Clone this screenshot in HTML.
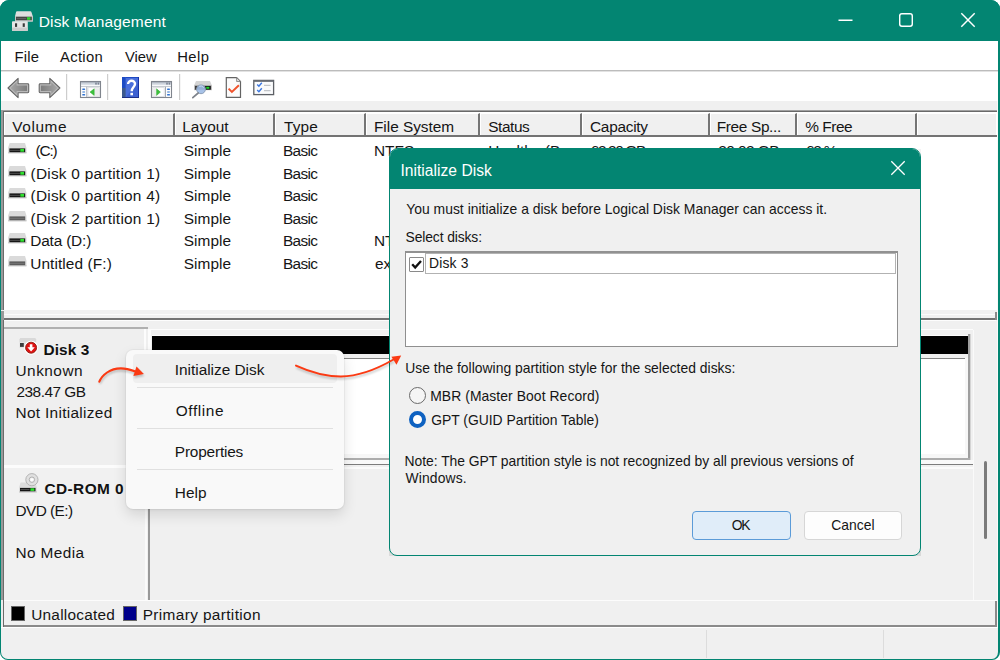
<!DOCTYPE html>
<html>
<head>
<meta charset="utf-8">
<title>Disk Management</title>
<style>
*{box-sizing:border-box;margin:0;padding:0}
html,body{width:1000px;height:660px;overflow:hidden;background:#fff}
body{font-family:"Liberation Sans",sans-serif;color:#151515;position:relative}
.abs{position:absolute}
.t{position:absolute;white-space:pre;line-height:20px;height:20px;color:#151515}
#win{position:absolute;left:0;top:0;width:1000px;height:660px;border-radius:9px 9px 8px 8px;background:#f0f0f0;overflow:hidden}
#winborder{position:absolute;left:0;top:0;width:1000px;height:660px;border-radius:9px 9px 8px 8px;border:1px solid #038572;border-right-width:2px;pointer-events:none;z-index:5}
#titlebar{left:0;top:0;width:1000px;height:41px;background:#038572}
#menubar{left:1px;top:41px;width:998px;height:29px;background:#fff}
#menuline{left:1px;top:70px;width:998px;height:2px;background:#e2e2e2;border-top:1px solid #bcbcbc;z-index:1}
#toolbar{left:1px;top:71px;width:998px;height:30px;background:#fff}
.hd{position:absolute;top:113px;height:22px;background:#f0f0f0;border-left:1px solid #fff;border-top:1px solid #fff;border-right:2px solid #757575}
</style>
</head>
<body>
<div id="win">
  <div id="titlebar" class="abs">
    <svg class="abs" style="left:11px;top:9px" width="24" height="24" viewBox="0 0 24 24">
      <path d="M6 2.3 L19.4 2.3 Q20.2 2.3 20.5 3.2 L21.8 7.2 L21.8 12.6 L4 12.6 L4 7.2 L5 3.2 Q5.2 2.3 6 2.3 Z" fill="#dedede"/>
      <path d="M4 7 H21.8 V12.6 H4 Z" fill="#c4c4c4"/>
      <rect x="5" y="7.8" width="15.8" height="3.4" fill="#454545"/>
      <rect x="5.6" y="9" width="9.5" height="0.8" fill="#6a6a6a"/>
      <rect x="16" y="8.2" width="3.4" height="2.6" fill="#2ed82e"/>
      <rect x="1" y="12.3" width="15.8" height="9.7" rx="0.8" fill="#e6e6e6"/>
      <rect x="1" y="18.6" width="15.8" height="3.4" rx="0.8" fill="#cdcdcd"/>
      <rect x="4" y="14.3" width="2.1" height="3.6" fill="#3a3a3a"/>
      <rect x="11.7" y="14.3" width="2.1" height="3.6" fill="#3a3a3a"/>
    </svg>
    <div class="t" style="left:38.70px;top:12px;font-size:15.5px;letter-spacing:0.156px;color:#fff">Disk Management</div>
    <svg class="abs" style="left:830px;top:6px" width="160" height="30" viewBox="0 0 160 30" fill="none" stroke="#fff" stroke-width="1.45">
      <path d="M8.5 14.2 H22.5"/>
      <rect x="69.7" y="7.7" width="12.6" height="12.6" rx="2.2"/>
      <path d="M131.3 7.3 L144.7 20.7 M144.7 7.3 L131.3 20.7"/>
    </svg>
  </div>
  <div id="menubar" class="abs"></div>
  <div class="t" style="left:14.50px;top:47px;font-size:14.8px;letter-spacing:0.196px">File</div>
  <div class="t" style="left:60.00px;top:47px;font-size:14.8px;letter-spacing:0.321px">Action</div>
  <div class="t" style="left:125.00px;top:47px;font-size:14.8px;letter-spacing:-0.040px">View</div>
  <div class="t" style="left:177.20px;top:47px;font-size:14.8px;letter-spacing:0.432px">Help</div>
  <div id="menuline" class="abs"></div>
  <div id="toolbar" class="abs">
    <svg class="abs" style="left:0;top:0" width="300" height="30" viewBox="1 71 300 30">
      <defs>
        <linearGradient id="ga" x1="0" y1="0" x2="1" y2="0"><stop offset="0" stop-color="#a6a6a6"/><stop offset="1" stop-color="#7d7d7d"/></linearGradient>
        <linearGradient id="gb" x1="1" y1="0" x2="0" y2="0"><stop offset="0" stop-color="#a6a6a6"/><stop offset="1" stop-color="#7d7d7d"/></linearGradient>
        <linearGradient id="gt" x1="0" y1="0" x2="0" y2="1"><stop offset="0" stop-color="#7f8692"/><stop offset="0.35" stop-color="#c5ccd6"/><stop offset="1" stop-color="#e3e7ec"/></linearGradient>
      </defs>
      <!-- back / forward arrows -->
      <path d="M8 88 L18.1 78.3 L18.1 83.8 L27.8 83.8 Q28.7 83.8 28.7 84.7 L28.7 91.8 Q28.7 92.7 27.8 92.7 L18.1 92.7 L18.1 97.6 Z" fill="#b9b9b9" stroke="#676767" stroke-width="1.1" stroke-linejoin="round"/>
      <path d="M10.6 88 L16.6 82.2 L16.6 85.4 L27 85.4 L27 91.1 L16.6 91.1 L16.6 93.8 Z" fill="url(#ga)"/>
      <path d="M59.9 88 L49.8 78.3 L49.8 83.8 L40.1 83.8 Q39.2 83.8 39.2 84.7 L39.2 91.8 Q39.2 92.7 40.1 92.7 L49.8 92.7 L49.8 97.6 Z" fill="#b9b9b9" stroke="#676767" stroke-width="1.1" stroke-linejoin="round"/>
      <path d="M57.3 88 L51.3 82.2 L51.3 85.4 L40.9 85.4 L40.9 91.1 L51.3 91.1 L51.3 93.8 Z" fill="url(#gb)"/>
      <rect x="66" y="74" width="1.2" height="26" fill="#cdcdcd"/>
      <rect x="107" y="74" width="1.2" height="26" fill="#cdcdcd"/>
      <rect x="179" y="74" width="1.2" height="26" fill="#cdcdcd"/>
      <!-- show/hide console tree -->
      <rect x="80.5" y="81.5" width="20" height="16" fill="#fdfdfd" stroke="#80858d" stroke-width="1.1"/>
      <rect x="81" y="81.6" width="19" height="3.6" fill="url(#gt)"/>
      <rect x="95.2" y="82.6" width="1.6" height="2" fill="#7c8494"/><rect x="97.6" y="82.6" width="1.6" height="2" fill="#7c8494"/>
      <rect x="81" y="86" width="19" height="0.8" fill="#b9bec6"/>
      <rect x="86.3" y="86.8" width="1" height="10.2" fill="#a4a9b1"/>
      <rect x="82.2" y="88.4" width="3" height="1.5" rx="0.7" fill="#2f73d3"/><rect x="82.2" y="91.3" width="3" height="1.5" rx="0.7" fill="#6f9fe0"/><rect x="82.2" y="94.1" width="3" height="1.5" rx="0.7" fill="#2f73d3"/>
      <rect x="88" y="87.6" width="11.4" height="9" fill="#fff" stroke="#d9dbde" stroke-width="0.8"/>
      <rect x="94.3" y="88.2" width="4.6" height="7.8" fill="#ececec"/>
      <path d="M94.2 88.8 L94.2 95.4 L90 92.1 Z" fill="#3dc13d" stroke="#2aa82a" stroke-width="0.5"/>
      <!-- help -->
      <rect x="122" y="77" width="17" height="21" fill="#4a6fdb"/>
      <rect x="122" y="77" width="3.6" height="11" fill="#1c4bc4"/>
      <rect x="122" y="88" width="3.6" height="10" fill="#3c5a8e"/>
      <rect x="125.6" y="77" width="13.4" height="1" fill="#1d49c4"/>
      <rect x="138" y="77" width="1" height="21" fill="#1733a6"/>
      <rect x="122" y="97" width="17" height="1" fill="#1b2f86"/>
      <path d="M133 88 L138 83 L138 97 L126 97 Z" fill="#3558c9" opacity="0.6"/>
      <path d="M128.1 84 C128 79.7 135.1 79.7 135 84 C135 86.8 131.7 87.3 131.7 91.2" fill="none" stroke="#fff" stroke-width="2.4"/>
      <rect x="130.4" y="92.8" width="2.6" height="2.5" fill="#fff"/>
      <!-- action pane -->
      <rect x="151.5" y="81.5" width="20" height="16" fill="#fdfdfd" stroke="#80858d" stroke-width="1.1"/>
      <rect x="152" y="81.6" width="19" height="3.6" fill="url(#gt)"/>
      <rect x="166.2" y="82.6" width="1.6" height="2" fill="#7c8494"/><rect x="168.6" y="82.6" width="1.6" height="2" fill="#7c8494"/>
      <rect x="152" y="86" width="19" height="0.8" fill="#b9bec6"/>
      <rect x="165" y="86.8" width="1" height="10.2" fill="#a4a9b1"/>
      <rect x="167" y="88.4" width="3" height="1.5" rx="0.7" fill="#2f73d3"/><rect x="167" y="91.3" width="3" height="1.5" rx="0.7" fill="#6f9fe0"/><rect x="167" y="94.1" width="3" height="1.5" rx="0.7" fill="#2f73d3"/>
      <rect x="152.8" y="87.6" width="11.4" height="9" fill="#fff" stroke="#d9dbde" stroke-width="0.8"/>
      <rect x="153.3" y="88.2" width="3.2" height="7.8" fill="#ececec"/>
      <path d="M156.6 88.8 L156.6 95.4 L160.4 92.1 Z" fill="#3dc13d" stroke="#2aa82a" stroke-width="0.5"/>
      <!-- disk + magnifier -->
      <path d="M196 81 L210 81 L212 85.4 L194 85.4 Z" fill="#d4d4d4"/>
      <rect x="194" y="85.2" width="18" height="5" fill="#bdbdbd"/>
      <rect x="195" y="85.8" width="16" height="3.9" fill="#3e3e3e"/>
      <rect x="205.3" y="86.2" width="5" height="3.2" fill="#0d0d0d"/>
      <rect x="206.2" y="86.8" width="3.2" height="2" fill="#1fd42a"/>
      <circle cx="201" cy="89.3" r="4.4" fill="#9dbbe6" fill-opacity="0.9" stroke="#8ea0b8" stroke-width="1"/>
      <path d="M199.2 86.4 A3.2 3.2 0 0 1 203.6 87.8" fill="none" stroke="#c9daf2" stroke-width="1"/>
      <path d="M198.2 93 L192.8 97.6" stroke="#7e838b" stroke-width="1.7" stroke-linecap="round" fill="none"/>
      <!-- doc with check -->
      <path d="M226.3 77.6 L236.6 77.6 L240.5 81.5 L240.5 97.4 L226.3 97.4 Z" fill="#fbfbfb" stroke="#636363" stroke-width="1.2"/>
      <path d="M236.6 77.6 L236.6 81.5 L240.5 81.5 Z" fill="#dcdcdc" stroke="#7a7a7a" stroke-width="0.8"/>
      <path d="M228.6 88.6 L231.9 91.9 L238.9 85.2" fill="none" stroke="#f0532c" stroke-width="2"/>
      <!-- checklist -->
      <rect x="253.8" y="80.4" width="19.8" height="14.2" fill="#fafbfc" stroke="#5d6066" stroke-width="1.3"/>
      <rect x="254" y="80.3" width="19.4" height="1.6" fill="#6c7078"/>
      <path d="M257.2 84.6 L258.9 86.3 L261.8 82.8" fill="none" stroke="#3a76e0" stroke-width="1.4"/>
      <path d="M257.2 90 L258.9 91.7 L261.8 88.2" fill="none" stroke="#3a76e0" stroke-width="1.4"/>
      <rect x="264" y="84.8" width="6.6" height="1" fill="#b3b7bd"/>
      <rect x="264" y="90.2" width="6.6" height="1" fill="#b3b7bd"/>
    </svg>
  </div>
  <!-- list view -->
  <div class="abs" style="left:1px;top:110px;width:996px;height:201px;background:#fff;border-top:1px solid #a0a0a0;border-left:3px solid #9a9a9a"></div>
  <div class="abs" style="left:3px;top:111px;width:994px;height:1px;background:#696969"></div>
  <div class="abs" style="left:3px;top:112px;width:1px;height:199px;background:#6b6b6b"></div>
  <div class="abs" style="left:4px;top:112px;width:993px;height:1px;background:#fff"></div>
  <div class="abs" style="left:4px;top:135px;width:993px;height:2px;background:#737373"></div>
  <div class="hd" style="left:4px;width:171px"></div>
  <div class="hd" style="left:175px;width:100px"></div>
  <div class="hd" style="left:275px;width:91px"></div>
  <div class="hd" style="left:366px;width:114px"></div>
  <div class="hd" style="left:480px;width:102px"></div>
  <div class="hd" style="left:582px;width:128px"></div>
  <div class="hd" style="left:710px;width:87px"></div>
  <div class="hd" style="left:797px;width:120px"></div>
  <div class="hd" style="left:917px;width:79px;border-right:none"></div>
  <div class="t" style="left:12.30px;top:117px;font-size:15.4px;letter-spacing:0.585px">Volume</div>
  <div class="t" style="left:182.30px;top:117px;font-size:15.4px;letter-spacing:0.013px">Layout</div>
  <div class="t" style="left:284.00px;top:117px;font-size:15.4px;letter-spacing:0.165px">Type</div>
  <div class="t" style="left:374.00px;top:117px;font-size:15.4px;letter-spacing:-0.027px">File System</div>
  <div class="t" style="left:488.30px;top:117px;font-size:15.4px;letter-spacing:-0.447px">Status</div>
  <div class="t" style="left:590.00px;top:117px;font-size:15.4px;letter-spacing:-0.269px">Capacity</div>
  <div class="t" style="left:716.70px;top:117px;font-size:15.4px;letter-spacing:-0.333px">Free Sp...</div>
  <div class="t" style="left:805.30px;top:117px;font-size:15.4px;letter-spacing:-0.469px">% Free</div>
  <svg class="abs" style="left:8px;top:143px" width="19" height="11" viewBox="0 0 19 11"><path d="M1.6 0 H17 L18.5 4.8 V10.3 H0.1 V4.8 Z" fill="#dadada"/><rect x="0.1" y="9.2" width="18.4" height="1.1" fill="#c6c6c6"/><rect x="1.4" y="5.4" width="15.8" height="3.8" fill="#161616"/><rect x="2" y="6.9" width="10" height="0.8" fill="#5a5a5a"/><rect x="12.3" y="5.9" width="3.8" height="2.8" fill="#2ee02e"/></svg>
  <div class="t" style="left:35.50px;top:141px;font-size:15.4px;letter-spacing:-1.172px">(C:)</div>
  <div class="t" style="left:183.70px;top:141px;font-size:15.4px;letter-spacing:0.063px">Simple</div>
  <div class="t" style="left:283.00px;top:141px;font-size:15.4px;letter-spacing:-0.660px">Basic</div>
  <div class="t" style="left:374.00px;top:141px;font-size:15.4px;letter-spacing:0.000px">NTFS</div>
  <div class="t" style="left:488.30px;top:141px;font-size:15.4px;letter-spacing:0.000px">Healthy (B...</div>
  <div class="t" style="left:590.70px;top:141px;font-size:15.4px;letter-spacing:-1.352px">62.20 GB</div>
  <div class="t" style="left:718.30px;top:141px;font-size:15.4px;letter-spacing:-0.537px">20.02 GB</div>
  <div class="t" style="left:806.00px;top:141px;font-size:15.4px;letter-spacing:-1.232px">62 %</div>
  <svg class="abs" style="left:8px;top:166px" width="19" height="11" viewBox="0 0 19 11"><path d="M1.6 0 H17 L18.5 4.8 V10.3 H0.1 V4.8 Z" fill="#dadada"/><rect x="0.1" y="9.2" width="18.4" height="1.1" fill="#c6c6c6"/><rect x="1.4" y="5.4" width="15.8" height="3.8" fill="#161616"/><rect x="2" y="6.9" width="10" height="0.8" fill="#5a5a5a"/><rect x="12.3" y="5.9" width="3.8" height="2.8" fill="#2ee02e"/></svg>
  <div class="t" style="left:30.50px;top:164px;font-size:15.4px;letter-spacing:0.250px">(Disk 0 partition 1)</div>
  <div class="t" style="left:183.70px;top:164px;font-size:15.4px;letter-spacing:0.063px">Simple</div>
  <div class="t" style="left:283.00px;top:164px;font-size:15.4px;letter-spacing:-0.660px">Basic</div>
  <svg class="abs" style="left:8px;top:188px" width="19" height="11" viewBox="0 0 19 11"><path d="M1.6 0 H17 L18.5 4.8 V10.3 H0.1 V4.8 Z" fill="#dadada"/><rect x="0.1" y="9.2" width="18.4" height="1.1" fill="#c6c6c6"/><rect x="1.4" y="5.4" width="15.8" height="3.8" fill="#161616"/><rect x="2" y="6.9" width="10" height="0.8" fill="#5a5a5a"/><rect x="12.3" y="5.9" width="3.8" height="2.8" fill="#2ee02e"/></svg>
  <div class="t" style="left:30.50px;top:186px;font-size:15.4px;letter-spacing:0.250px">(Disk 0 partition 4)</div>
  <div class="t" style="left:183.70px;top:186px;font-size:15.4px;letter-spacing:0.063px">Simple</div>
  <div class="t" style="left:283.00px;top:186px;font-size:15.4px;letter-spacing:-0.660px">Basic</div>
  <svg class="abs" style="left:8px;top:211px" width="19" height="11" viewBox="0 0 19 11"><path d="M1.6 0 H17 L18.5 4.8 V10.3 H0.1 V4.8 Z" fill="#dadada"/><rect x="0.1" y="9.2" width="18.4" height="1.1" fill="#c6c6c6"/><rect x="1.4" y="5.4" width="15.8" height="3.8" fill="#5c5c5c"/><rect x="2" y="6.9" width="14.5" height="0.8" fill="#7a7a7a"/></svg>
  <div class="t" style="left:30.50px;top:209px;font-size:15.4px;letter-spacing:0.250px">(Disk 2 partition 1)</div>
  <div class="t" style="left:183.70px;top:209px;font-size:15.4px;letter-spacing:0.063px">Simple</div>
  <div class="t" style="left:283.00px;top:209px;font-size:15.4px;letter-spacing:-0.660px">Basic</div>
  <svg class="abs" style="left:8px;top:233px" width="19" height="11" viewBox="0 0 19 11"><path d="M1.6 0 H17 L18.5 4.8 V10.3 H0.1 V4.8 Z" fill="#dadada"/><rect x="0.1" y="9.2" width="18.4" height="1.1" fill="#c6c6c6"/><rect x="1.4" y="5.4" width="15.8" height="3.8" fill="#161616"/><rect x="2" y="6.9" width="10" height="0.8" fill="#5a5a5a"/><rect x="12.3" y="5.9" width="3.8" height="2.8" fill="#2ee02e"/></svg>
  <div class="t" style="left:30.20px;top:231px;font-size:15.4px;letter-spacing:-0.163px">Data (D:)</div>
  <div class="t" style="left:183.70px;top:231px;font-size:15.4px;letter-spacing:0.063px">Simple</div>
  <div class="t" style="left:283.00px;top:231px;font-size:15.4px;letter-spacing:-0.660px">Basic</div>
  <div class="t" style="left:374.00px;top:231px;font-size:15.4px;letter-spacing:0.000px">NTFS</div>
  <svg class="abs" style="left:8px;top:256px" width="19" height="11" viewBox="0 0 19 11"><path d="M1.6 0 H17 L18.5 4.8 V10.3 H0.1 V4.8 Z" fill="#dadada"/><rect x="0.1" y="9.2" width="18.4" height="1.1" fill="#c6c6c6"/><rect x="1.4" y="5.4" width="15.8" height="3.8" fill="#5c5c5c"/><rect x="2" y="6.9" width="14.5" height="0.8" fill="#7a7a7a"/></svg>
  <div class="t" style="left:30.20px;top:254px;font-size:15.4px;letter-spacing:0.103px">Untitled (F:)</div>
  <div class="t" style="left:183.70px;top:254px;font-size:15.4px;letter-spacing:0.063px">Simple</div>
  <div class="t" style="left:283.00px;top:254px;font-size:15.4px;letter-spacing:-0.660px">Basic</div>
  <div class="t" style="left:375.00px;top:254px;font-size:15.4px;letter-spacing:0.000px">exFAT</div>
  <!-- splitter -->
  <div class="abs" style="left:1px;top:310px;width:998px;height:11px;background:#f0f0f0"></div>
  <div class="abs" style="left:4px;top:314px;width:992px;height:1px;background:#fbfbfb"></div>
  <div class="abs" style="left:4px;top:318px;width:992px;height:2px;background:#737373"></div>
  <div class="abs" style="left:4px;top:320px;width:992px;height:1px;background:#fdfdfd"></div>
  <div class="abs" style="left:995px;top:312px;width:2px;height:8px;background:#8a8a8a"></div>
  <!-- lower pane -->
  <div class="abs" style="left:1px;top:311px;width:3px;height:316px;background:#9a9a9a"></div>
  <div class="abs" style="left:3px;top:320px;width:1px;height:307px;background:#6b6b6b"></div>
  <div class="abs" style="left:4px;top:327px;width:144px;height:138px;background:#efefef;border-top:2px solid #b0b0b0"></div>
  <div class="abs" style="left:144px;top:329px;width:2px;height:136px;background:#fcfcfc"></div>
  <div class="abs" style="left:148px;top:329px;width:3px;height:136px;background:#fcfcfc"></div>
  <div class="abs" style="left:151px;top:329px;width:822px;height:1px;background:#fcfcfc"></div>
  <div class="abs" style="left:4px;top:465px;width:142px;height:136px;background:#f1f1f1;border-top:3px solid #fcfcfc"></div>
  <div class="abs" style="left:145px;top:466px;width:2px;height:134px;background:#fafafa"></div>
  <div class="abs" style="left:148px;top:466px;width:2px;height:134px;background:#989898"></div>
  <div class="abs" style="left:152px;top:335px;width:816px;height:1px;background:#fbfbfb"></div>
  <div class="abs" style="left:152px;top:336px;width:816px;height:18px;background:#000"></div>
  <div class="abs" style="left:968px;top:334px;width:2px;height:126px;background:#9e9e9e"></div>
  <div class="abs" style="left:970px;top:334px;width:1px;height:126px;background:#d4d4d4"></div>
  <div class="abs" style="left:152px;top:358px;width:816px;height:100px;background:#f7f7f7"></div>
  <div class="abs" style="left:152px;top:358px;width:813px;height:96px;background:#fff;border-top:1px solid #858585"></div>
  <div class="abs" style="left:152px;top:458px;width:818px;height:2px;background:#adadad"></div>
  <div class="abs" style="left:152px;top:460px;width:821px;height:4px;background:#f9f9f9"></div>
  <div class="abs" style="left:152px;top:464px;width:821px;height:1px;background:#7c7c7c"></div>
  <div class="abs" style="left:152px;top:467px;width:821px;height:2px;background:#fbfbfb"></div>
  <div class="abs" style="left:973px;top:330px;width:1px;height:270px;background:#fafafa"></div>
  <div class="abs" style="left:984px;top:461px;width:3px;height:78px;background:#7b7b7b;border-radius:2px"></div>
  <div class="abs" style="left:997px;top:101px;width:1px;height:527px;background:#fafafa"></div>
  <!-- Disk 3 label -->
  <svg class="abs" style="left:18px;top:336px" width="22" height="20" viewBox="0 0 22 20">
    <path d="M2.2 2 H17.4 L18.2 3.4 V6.6 H1.4 V3.4 Z" fill="#d9d9d9"/>
    <rect x="1.4" y="6.4" width="9" height="5.4" fill="#e3e3e3"/>
    <rect x="2" y="7" width="3.8" height="3.9" fill="#3d3d3d"/>
    <circle cx="13.1" cy="11.7" r="7" fill="#fff"/>
    <circle cx="13.1" cy="11.7" r="5.5" fill="#e01212" stroke="#8d1c10" stroke-width="0.9"/>
    <path d="M11.8 8.3 H14.4 V11.3 H16.8 L13.1 15.6 L9.4 11.3 H11.8 Z" fill="#fff"/>
  </svg>
  <div class="t" style="left:43.50px;top:340px;font-size:15.4px;letter-spacing:0.083px;font-weight:bold;color:#111">Disk 3</div>
  <div class="t" style="left:15.50px;top:361px;font-size:15.4px;letter-spacing:0.483px">Unknown</div>
  <div class="t" style="left:16.50px;top:382px;font-size:15.4px;letter-spacing:-0.515px">238.47 GB</div>
  <div class="t" style="left:15.50px;top:403px;font-size:15.4px;letter-spacing:0.312px">Not Initialized</div>
  <svg class="abs" style="left:18px;top:472px" width="21" height="21" viewBox="0 0 21 21">
    <path d="M2.6 10.6 H17.4 L18.8 15.6 V20.5 H1 V15.6 Z" fill="#dcdcdc"/>
    <circle cx="13.9" cy="7.7" r="6.1" fill="#e0e0e0" stroke="#b4b4b4" stroke-width="1"/>
    <circle cx="13.9" cy="7.7" r="2.7" fill="#f2f2f2" stroke="#b0b0b0" stroke-width="1"/>
    <circle cx="13.9" cy="7.7" r="1.2" fill="#fff"/>
    <rect x="1" y="19.3" width="17.8" height="1.2" fill="#cacaca"/>
    <rect x="2" y="15.9" width="15.5" height="3.4" fill="#161616"/>
    <rect x="2.5" y="17.2" width="9" height="0.8" fill="#5a5a5a"/>
    <rect x="12.4" y="16.3" width="4" height="2.6" fill="#2ee02e"/>
  </svg>
  <div class="t" style="left:44.50px;top:479px;font-size:15.4px;letter-spacing:0.423px;font-weight:bold;color:#111">CD-ROM 0</div>
  <div class="t" style="left:15.50px;top:501px;font-size:15.4px;letter-spacing:-0.562px">DVD (E:)</div>
  <div class="t" style="left:15.50px;top:543px;font-size:15.4px;letter-spacing:0.384px">No Media</div>
  <!-- legend -->
  <div class="abs" style="left:1px;top:600px;width:2px;height:28px;background:#ececec"></div>
  <div class="abs" style="left:4px;top:600px;width:993px;height:26px;background:#f0f0f0;border-top:1px solid #fcfcfc"></div>
  <div class="abs" style="left:4px;top:625px;width:993px;height:2px;background:#8a8a8a"></div>
  <div class="abs" style="left:995px;top:601px;width:2px;height:25px;background:#8a8a8a"></div>
  <div class="abs" style="left:1px;top:627px;width:998px;height:1px;background:#fff"></div>
  <div class="abs" style="left:11px;top:606px;width:14px;height:15px;background:#000;border:1px solid #666"></div>
  <div class="t" style="left:31.20px;top:605px;font-size:15.4px;letter-spacing:0.238px">Unallocated</div>
  <div class="abs" style="left:123px;top:606px;width:14px;height:15px;background:#00008a;border:1px solid #666"></div>
  <div class="t" style="left:142.70px;top:605px;font-size:15.4px;letter-spacing:0.364px">Primary partition</div>
  <!-- status bar -->
  <div class="abs" style="left:706px;top:630px;width:1px;height:28px;background:#dcdcdc"></div>
  <div class="abs" style="left:883px;top:630px;width:1px;height:28px;background:#dcdcdc"></div>
</div>
<div id="winborder"></div>
<!-- context menu -->
<div id="ctx" class="abs" style="left:126px;top:350px;width:218px;height:159px;background:#f9f9f9;border-radius:7px;box-shadow:0 0 0 1px rgba(0,0,0,0.03),0 6px 14px rgba(0,0,0,0.12),0 1px 3px rgba(0,0,0,0.04);z-index:20">
  <div class="abs" style="left:7px;top:4px;width:204px;height:29px;background:#efefef;border-radius:4px"></div>
  <div class="abs" style="left:11px;top:37px;width:196px;height:1px;background:#e0e0e0"></div>
  <div class="abs" style="left:11px;top:78px;width:196px;height:1px;background:#e0e0e0"></div>
  <div class="abs" style="left:11px;top:119px;width:196px;height:1px;background:#e0e0e0"></div>
</div>
<div class="abs" style="left:0;top:0;z-index:21">
  <div class="t" style="left:174.80px;top:360px;font-size:15.4px;letter-spacing:-0.015px">Initialize Disk</div>
  <div class="t" style="left:175.80px;top:401px;font-size:15.4px;letter-spacing:0.593px">Offline</div>
  <div class="t" style="left:174.80px;top:442px;font-size:15.4px;letter-spacing:-0.183px">Properties</div>
  <div class="t" style="left:174.80px;top:483px;font-size:15.4px;letter-spacing:0.036px">Help</div>
</div>
<!-- dialog -->
<div class="abs" style="left:912px;top:149px;width:9px;height:9px;background:#f3f3f3;z-index:9"></div>
<div class="abs" style="left:912px;top:547px;width:9px;height:9px;background:#d9d9d9;z-index:9"></div>
<div class="abs" style="left:389px;top:547px;width:9px;height:9px;background:#dcdcdc;z-index:9"></div>
<div id="dlg" class="abs" style="left:389px;top:148px;width:532px;height:408px;background:#f0f0f0;border:1px solid #038572;border-radius:9px 9px 8px 8px;overflow:hidden;z-index:10">
  <div class="abs" style="left:0;top:0;width:533px;height:40px;background:#038572"></div>
  <svg class="abs" style="left:494px;top:5px" width="28" height="28" viewBox="0 0 28 28" fill="none" stroke="#fff" stroke-width="1.3"><path d="M7.3 7.3 L20.7 20.7 M20.7 7.3 L7.3 20.7"/></svg>
  <div class="abs" style="left:15px;top:102px;width:493px;height:96px;background:#fff;border:1px solid #8f8f8f;border-top:2px solid #919191"></div>
  <div class="abs" style="left:35px;top:104px;width:471px;height:21px;border:1px solid #b2b2b2"></div>
  <div class="abs" style="left:19px;top:108px;width:15px;height:15px;background:#fff;border:1px solid #8a8a8a;border-radius:1px"></div>
  <svg class="abs" style="left:19px;top:108px" width="15" height="15" viewBox="0 0 15 15"><path d="M3.2 7.2 L6.2 10.6 L12 3.9" fill="none" stroke="#111" stroke-width="2.3"/></svg>
  <div class="abs" style="left:19px;top:238px;width:17px;height:17px;border-radius:50%;background:#f5f5f5;border:1px solid #6a6a6a"></div>
  <div class="abs" style="left:19px;top:262px;width:17px;height:17px;border-radius:50%;background:#fff;border:4.5px solid #0f62c1"></div>
  <div class="abs" style="left:302px;top:362px;width:99px;height:29px;background:#e0edf9;border:1px solid #5b9bd8;border-radius:4px"></div>
  <div class="abs" style="left:414px;top:362px;width:98px;height:29px;background:#fdfdfd;border:1px solid #d6d6d6;border-radius:4px"></div>
</div>
<div class="abs" style="left:0;top:0;z-index:11">
  <div class="t" style="left:400.40px;top:161px;font-size:15.6px;letter-spacing:0.029px;color:#fff">Initialize Disk</div>
  <div class="t" style="left:406.20px;top:199px;font-size:13.9px;letter-spacing:0.021px">You must initialize a disk before Logical Disk Manager can access it.</div>
  <div class="t" style="left:405.50px;top:227px;font-size:13.9px;letter-spacing:-0.118px">Select disks:</div>
  <div class="t" style="left:429.00px;top:253px;font-size:13.9px;letter-spacing:0.167px">Disk 3</div>
  <div class="t" style="left:405.20px;top:358px;font-size:13.9px;letter-spacing:0.009px">Use the following partition style for the selected disks:</div>
  <div class="t" style="left:430.20px;top:386px;font-size:13.9px;letter-spacing:0.071px">MBR (Master Boot Record)</div>
  <div class="t" style="left:431.20px;top:410px;font-size:13.9px;letter-spacing:-0.006px">GPT (GUID Partition Table)</div>
  <div class="t" style="left:404.50px;top:451px;font-size:13.9px;letter-spacing:-0.028px">Note: The GPT partition style is not recognized by all previous versions of</div>
  <div class="t" style="left:405.50px;top:468px;font-size:13.9px;letter-spacing:0.122px">Windows.</div>
  <div class="t" style="left:731.70px;top:515px;font-size:13.9px;letter-spacing:-1.305px">OK</div>
  <div class="t" style="left:831.20px;top:515px;font-size:13.9px;letter-spacing:0.029px">Cancel</div>
</div>
<!-- arrows -->
<svg class="abs" style="left:0;top:0;z-index:30" width="1000" height="660" viewBox="0 0 1000 660" fill="none">
  <defs><filter id="ash" x="-10%" y="-30%" width="120%" height="180%"><feGaussianBlur stdDeviation="1.1"/></filter></defs>
  <g opacity="0.22" filter="url(#ash)" transform="translate(0.5,2)">
    <path d="M99.3 381.7 C102 375 110 368.3 121 368.4 C126 368.5 131 370 135.5 371.5" stroke="#000" stroke-width="2.1"/>
    <path d="M136.5 366.5 L143.9 374.1 L133.4 375.9 Z" fill="#000"/>
    <path d="M296 365.6 C310 372 325 376.5 341 376.4 C358 376.3 377 369 393.5 359.5" stroke="#000" stroke-width="2"/>
  </g>
  <path d="M99.3 381.7 C102 375 110 368.3 121 368.4 C126 368.5 131 370 135.5 371.5" stroke="#fb3a13" stroke-width="2.1" stroke-linecap="round"/>
  <path d="M136.5 366.5 L143.9 374.1 L133.4 375.9 Z" fill="#fb3a13"/>
  <path d="M296 365.6 C310 372 325 376.5 341 376.4 C358 376.3 377 369 393.5 359.5" stroke="#fb3a13" stroke-width="2" stroke-linecap="round"/>
  <path d="M401.2 355.4 L391.4 356.8 L396.5 364.8 Z" fill="#fb3a13"/>
</svg>
</body>
</html>
